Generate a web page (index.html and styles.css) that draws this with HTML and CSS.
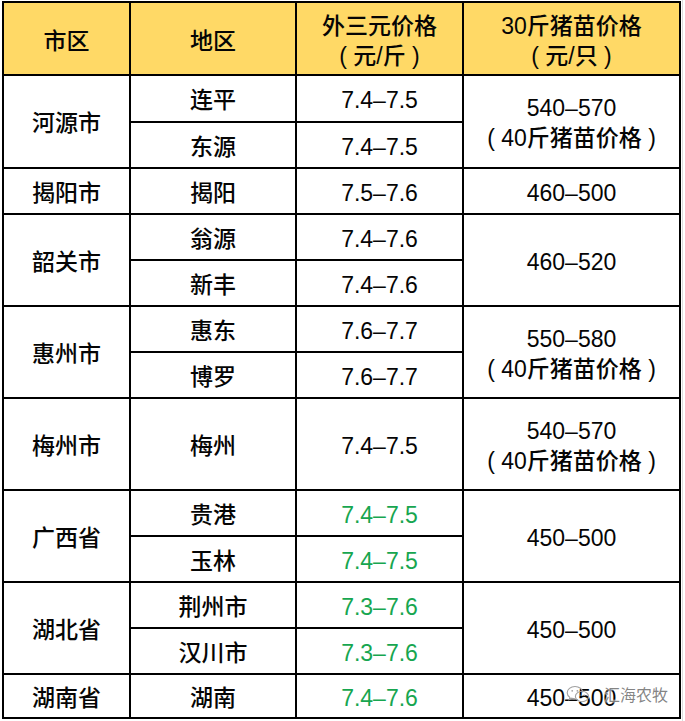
FILE: index.html
```html
<!DOCTYPE html>
<html lang="zh-CN">
<head>
<meta charset="utf-8">
<link rel="stylesheet" href="styles.css">
</head>
<body>
<div class="sheet">
  <table class="price">
    <colgroup>
      <col class="c1"><col class="c2"><col class="c3"><col class="c4">
    </colgroup>
    <tr class="head">
      <td>市区</td>
      <td>地区</td>
      <td>外三元价格<br>( 元/斤 )</td>
      <td>30斤猪苗价格<br>( 元/只 )</td>
    </tr>
    <tr class="r first">
      <td rowspan="2">河源市</td><td>连平</td><td>7.4–7.5</td>
      <td rowspan="2">540–570<br>( 40斤猪苗价格 )</td>
    </tr>
    <tr class="r"><td>东源</td><td>7.4–7.5</td></tr>
    <tr class="r">
      <td>揭阳市</td><td>揭阳</td><td>7.5–7.6</td><td>460–500</td>
    </tr>
    <tr class="r">
      <td rowspan="2">韶关市</td><td>翁源</td><td>7.4–7.6</td>
      <td rowspan="2">460–520</td>
    </tr>
    <tr class="r"><td>新丰</td><td>7.4–7.6</td></tr>
    <tr class="r">
      <td rowspan="2">惠州市</td><td>惠东</td><td>7.6–7.7</td>
      <td rowspan="2">550–580<br>( 40斤猪苗价格 )</td>
    </tr>
    <tr class="r"><td>博罗</td><td>7.6–7.7</td></tr>
    <tr class="r tall">
      <td>梅州市</td><td>梅州</td><td>7.4–7.5</td>
      <td>540–570<br>( 40斤猪苗价格 )</td>
    </tr>
    <tr class="r">
      <td rowspan="2">广西省</td><td>贵港</td><td class="green">7.4–7.5</td>
      <td rowspan="2">450–500</td>
    </tr>
    <tr class="r"><td>玉林</td><td class="green">7.4–7.5</td></tr>
    <tr class="r">
      <td rowspan="2">湖北省</td><td>荆州市</td><td class="green">7.3–7.6</td>
      <td rowspan="2">450–500</td>
    </tr>
    <tr class="r"><td>汉川市</td><td class="green">7.3–7.6</td></tr>
    <tr class="r last">
      <td>湖南省</td><td>湖南</td><td class="green">7.4–7.6</td><td>450–500</td>
    </tr>
  </table>
  <div class="watermark">
    <svg class="wx" width="24" height="18" viewBox="0 0 24 18">
      <path d="M9 1.5C4.6 1.5 1.2 4.3 1.2 7.7c0 1.9 1 3.5 2.7 4.7l-.7 2.2 2.6-1.4c1 .3 2 .5 3.2.5" fill="none" stroke="#a0a0a0" stroke-width="1.1"/>
      <path d="M9 1.5c4.2 0 7.6 2.6 7.8 5.9" fill="none" stroke="#a0a0a0" stroke-width="1.1"/>
      <ellipse cx="16" cy="11.5" rx="6.6" ry="5.2" fill="none" stroke="#a0a0a0" stroke-width="1.1"/>
      <circle cx="6.2" cy="5.8" r=".9" fill="#a0a0a0"/>
      <circle cx="11.4" cy="5.8" r=".9" fill="#a0a0a0"/>
      <circle cx="13.8" cy="10.2" r=".8" fill="#a0a0a0"/>
      <circle cx="18.2" cy="10.2" r=".8" fill="#a0a0a0"/>
    </svg>
    <span>汇海农牧</span>
  </div>
</div>
</body>
</html>
```

FILE: styles.css
```css
html, body {
  margin: 0;
  padding: 0;
  background: #ffffff;
}

.sheet {
  position: relative;
  width: 683px;
  height: 721px;
  padding: 1px 0 0 2px;
  box-sizing: border-box;
  border-right: 1px solid #dcdcdc;
}

.price {
  border-collapse: collapse;
  table-layout: fixed;
  width: 679px;
  font-family: "Liberation Sans", "Noto Sans CJK SC", sans-serif;
  font-size: 23px;
  font-weight: 500;
  color: #050505;
}

.c1 { width: 127px; }
.c2 { width: 166px; }
.c3 { width: 167px; }
.c4 { width: 217px; }

.price td {
  border: 2px solid #000000;
  padding: 0;
  text-align: center;
  vertical-align: middle;
  line-height: 30px;
  white-space: pre-line;
}

.head td {
  background: #ffd966;
  padding-top: 5px;
}

.head { height: 73px; }
.r { height: 46px; }
.r.first { height: 47px; }
.r.tall { height: 92px; }
.r.last { height: 44px; }

.r td {
  padding-top: 3px;
}

.green {
  color: #17a650;
}

.watermark {
  position: absolute;
  left: 566px;
  top: 682px;
  display: flex;
  align-items: center;
  gap: 14px;
  font-family: "Noto Sans CJK SC", sans-serif;
  font-size: 16px;
  color: rgba(110, 110, 110, 0.85);
  text-shadow: 0 0 2px #ffffff, 0 0 2px #ffffff;
}

.wx {
  display: block;
}
```
